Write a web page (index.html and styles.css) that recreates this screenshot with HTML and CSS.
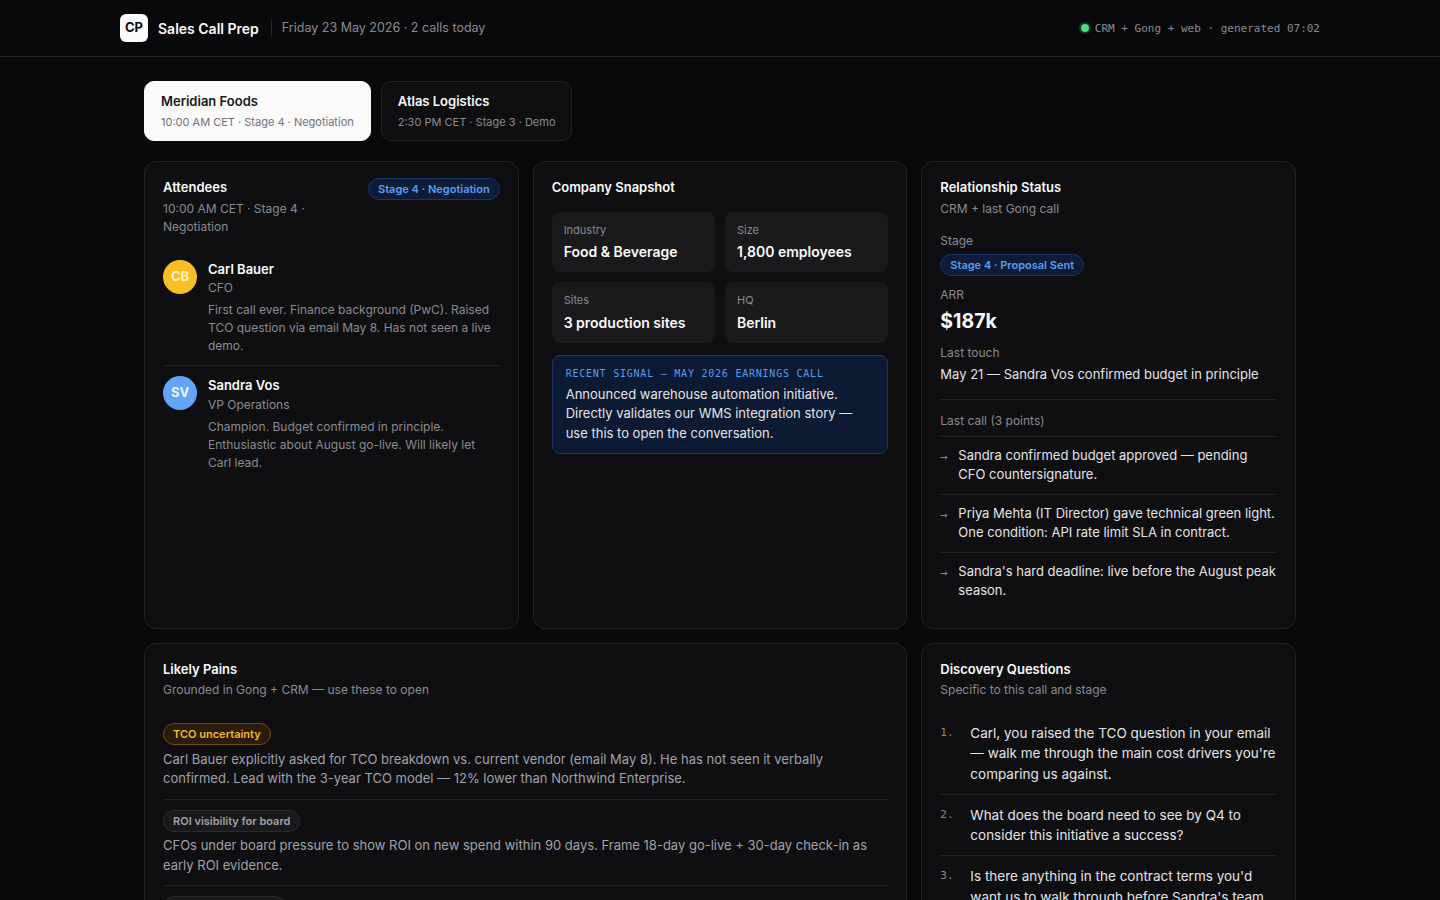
FILE: index.html
```html
<!DOCTYPE html>
<html lang="en">
  <head>
    <meta charset="UTF-8" />
    <meta name="viewport" content="width=device-width, initial-scale=1.0" />
    <title>Sales Call Prep</title>
    <link rel="stylesheet" href="styles.css">
  </head>
  <body>
    <!-- top bar -->
    <header class="topbar">
      <div class="topbar-inner">
        <div class="brand">
          <div class="logo">CP</div>
          <div class="brand-name">Sales Call Prep</div>
          <div class="brand-date">Friday 23 May 2026 · 2 calls today</div>
        </div>
        <div class="status">
          <span class="status-dot"></span>
          <span class="status-text">CRM + Gong + web · generated 07:02</span>
        </div>
      </div>
    </header>

    <main class="page">
      <!-- call tabs -->
      <div class="tabs">
        <div class="tab active">
          <div class="tab-name">Meridian Foods</div>
          <div class="tab-meta">10:00 AM CET · Stage 4 · Negotiation</div>
        </div>
        <div class="tab">
          <div class="tab-name">Atlas Logistics</div>
          <div class="tab-meta">2:30 PM CET · Stage 3 · Demo</div>
        </div>
      </div>

      <div class="grid">
        <!-- attendees -->
        <section class="card">
          <div class="card-head">
            <div>
              <h2 class="card-title">Attendees</h2>
              <p class="card-sub">10:00 AM CET · Stage 4 · Negotiation</p>
            </div>
            <span class="pill pill-blue">Stage 4 · Negotiation</span>
          </div>
          <div class="person">
            <div class="avatar avatar-amber">CB</div>
            <div>
              <div class="person-name">Carl Bauer</div>
              <div class="person-role">CFO</div>
              <p class="person-note">First call ever. Finance background (PwC). Raised TCO question via email May 8. Has not seen a live demo.</p>
            </div>
          </div>
          <div class="person">
            <div class="avatar avatar-blue">SV</div>
            <div>
              <div class="person-name">Sandra Vos</div>
              <div class="person-role">VP Operations</div>
              <p class="person-note">Champion. Budget confirmed in principle. Enthusiastic about August go-live. Will likely let Carl lead.</p>
            </div>
          </div>
        </section>

        <!-- company -->
        <section class="card">
          <h2 class="card-title">Company Snapshot</h2>
          <div class="facts">
            <div class="fact">
              <div class="fact-label">Industry</div>
              <div class="fact-value">Food &amp; Beverage</div>
            </div>
            <div class="fact">
              <div class="fact-label">Size</div>
              <div class="fact-value">1,800 employees</div>
            </div>
            <div class="fact">
              <div class="fact-label">Sites</div>
              <div class="fact-value">3 production sites</div>
            </div>
            <div class="fact">
              <div class="fact-label">HQ</div>
              <div class="fact-value">Berlin</div>
            </div>
          </div>
          <div class="signal">
            <div class="signal-label">RECENT SIGNAL — MAY 2026 EARNINGS CALL</div>
            <p class="signal-text">Announced warehouse automation initiative. Directly validates our WMS integration story — use this to open the conversation.</p>
          </div>
        </section>

        <!-- relationship -->
        <section class="card">
          <h2 class="card-title">Relationship Status</h2>
          <p class="card-sub">CRM + last Gong call</p>
          <div class="field-label first">Stage</div>
          <span class="pill pill-blue">Stage 4 · Proposal Sent</span>
          <div class="field-label">ARR</div>
          <div class="arr">$187k</div>
          <div class="field-label">Last touch</div>
          <div class="touch">May 21 — Sandra Vos confirmed budget in principle</div>
          <div class="points-label">Last call (3 points)</div>
          <ul class="points">
            <li class="point"><span class="arrow">→</span><span>Sandra confirmed budget approved — pending CFO countersignature.</span></li>
            <li class="point"><span class="arrow">→</span><span>Priya Mehta (IT Director) gave technical green light. One condition: API rate limit SLA in contract.</span></li>
            <li class="point"><span class="arrow">→</span><span>Sandra's hard deadline: live before the August peak season.</span></li>
          </ul>
        </section>

        <!-- pains -->
        <section class="card wide">
          <h2 class="card-title">Likely Pains</h2>
          <p class="card-sub">Grounded in Gong + CRM — use these to open</p>
          <div class="pains">
            <div class="pain">
              <span class="pill pill-amber">TCO uncertainty</span>
              <p class="pain-text">Carl Bauer explicitly asked for TCO breakdown vs. current vendor (email May 8). He has not seen it verbally confirmed. Lead with the 3-year TCO model — 12% lower than Northwind Enterprise.</p>
            </div>
            <div class="pain">
              <span class="pill pill-grey">ROI visibility for board</span>
              <p class="pain-text">CFOs under board pressure to show ROI on new spend within 90 days. Frame 18-day go-live + 30-day check-in as early ROI evidence.</p>
            </div>
            <div class="pain">
              <span class="pill pill-grey">Peak season timing</span>
              <p class="pain-text">Sandra needs the system live before the August peak season. Walk through the rollout plan early.</p>
            </div>
          </div>
        </section>

        <!-- questions -->
        <section class="card">
          <h2 class="card-title">Discovery Questions</h2>
          <p class="card-sub">Specific to this call and stage</p>
          <ol class="questions">
            <li class="question"><span class="q-num">1.</span><span>Carl, you raised the TCO question in your email — walk me through the main cost drivers you're comparing us against.</span></li>
            <li class="question"><span class="q-num">2.</span><span>What does the board need to see by Q4 to consider this initiative a success?</span></li>
            <li class="question"><span class="q-num">3.</span><span>Is there anything in the contract terms you'd want us to walk through before Sandra's team signs?</span></li>
          </ol>
        </section>
      </div>
    </main>
  </body>
</html>
```

FILE: styles.css
```css
* {
  padding: 0;
  margin: 0;
  box-sizing: border-box;
}

body {
  font-family: Inter, "Liberation Sans", sans-serif;
  font-size: 13px;
  line-height: 1.5;
  color: #fafafa;
  background-color: #09090b;
}

/* top bar */
.topbar {
  height: 57px;
  border-bottom: 1px solid #27272a;
}

.topbar-inner {
  display: flex;
  align-items: center;
  justify-content: space-between;
  max-width: 1200px;
  height: 56px;
  margin: 0 auto;
}

.brand {
  display: flex;
  align-items: center;
}

.logo {
  width: 28px;
  height: 28px;
  border-radius: 6px;

  text-align: center;
  line-height: 26px;
  font-size: 13px;
  font-weight: 700;
  color: #09090b;

  background-color: #fafafa;
}

.brand-name {
  margin: 0 12px 0 10px;

  font-size: 14px;
  font-weight: 600;
}

.brand-date {
  padding-left: 10px;
  border-left: 1px solid #27272a;

  font-size: 12.5px;
  line-height: 18px;
  color: #8a8a93;
}

.status {
  display: flex;
  align-items: center;
  gap: 6px;

  font-family: "DejaVu Sans Mono", "Liberation Mono", monospace;
  font-size: 11px;
  color: #8a8a93;
}

.status-text {
  padding-top: 2px;
}

.status-dot {
  width: 8px;
  height: 8px;
  border-radius: 50%;

  background-color: #4ade80;
  box-shadow: 0 0 0 2px rgba(74, 222, 128, 0.2);
}

/* page */
.page {
  max-width: 1200px;
  margin: 0 auto;
  padding: 24px;
}

.tabs {
  display: flex;
  gap: 10px;
  margin-bottom: 20px;
}

.tab {
  height: 60px;
  padding: 9px 16px;
  border: 1px solid #232326;
  border-radius: 10px;

  background-color: #0f0f12;
}

.tab.active {
  border-color: #fafafa;
  color: #18181b;
  background-color: #fafafa;
}

.tab-name {
  font-size: 13px;
  font-weight: 600;
  line-height: 20px;
}

.tab-meta {
  margin-top: 2px;

  font-size: 11px;
  line-height: 18px;
  color: #8a8a93;
}

.tab.active .tab-meta {
  color: #71717a;
}

.grid {
  display: grid;
  grid-template-columns: repeat(3, 1fr);
  grid-template-rows: 467.5px auto;
  gap: 14px;
}

.card {
  padding: 16px 18px 18px;
  border: 1px solid #232326;
  border-radius: 12px;

  background-color: #0f0f12;
}

.card.wide {
  grid-column: span 2;
}

.card-head {
  display: flex;
  justify-content: space-between;
  align-items: flex-start;
  gap: 16px;
}

.card-title {
  font-size: 13px;
  font-weight: 600;
  line-height: 18px;
}

.card-sub {
  margin-top: 3.5px;

  font-size: 12px;
  line-height: 18px;
  color: #8a8a93;
}

/* pills */
.pill {
  display: inline-block;
  padding: 2px 9px;
  border: 1px solid;
  border-radius: 999px;

  font-size: 11px;
  font-weight: 600;
  line-height: 16px;
  white-space: nowrap;
}

.pill-blue {
  border-color: #1b3566;
  color: #5a9cf0;
  background-color: #0d1c38;
}

.pill-amber {
  border-color: #6e4a18;
  color: #f5b82e;
  background-color: #2a1c08;
}

.pill-grey {
  border-color: #2a2a2e;
  color: #a1a1aa;
  background-color: #1a1a1d;
}

/* attendees */
.person {
  display: flex;
  gap: 11px;
  padding: 0 0 10.75px;
  border-bottom: 1px solid #232326;
  margin-bottom: 10px;
}

.card-head + .person {
  margin-top: 24px;
}

.person:last-child {
  border-bottom: 0;
}

.avatar {
  flex-shrink: 0;
  width: 34px;
  height: 34px;
  border-radius: 50%;

  text-align: center;
  line-height: 32px;
  font-size: 13px;
  font-weight: 700;
}

.avatar-amber {
  color: #fef3c7;
  background-color: #fbbf24;
}

.avatar-blue {
  color: #eff6ff;
  background-color: #60a5fa;
}

.person-name {
  font-size: 13px;
  font-weight: 600;
  line-height: 19.5px;
}

.person-role {
  font-size: 12px;
  line-height: 18px;
  color: #8a8a93;
}

.person-note {
  margin-top: 3.5px;

  font-size: 12px;
  line-height: 18px;
  color: #8a8a93;
}

.person:last-child .person-note {
  margin-top: 4.5px;
}

/* company */
.facts {
  display: grid;
  grid-template-columns: 1fr 1fr;
  gap: 10px;
  margin-top: 15.75px;
}

.fact {
  padding: 10px 12px;
  border-radius: 8px;

  background-color: #1a1a1d;
}

.fact-label {
  font-size: 11px;
  line-height: 16.5px;
  color: #8a8a93;
}

.fact-value {
  margin-top: 3px;

  font-size: 14px;
  font-weight: 600;
  line-height: 21px;
}

.signal {
  margin-top: 12px;
  padding: 10px 13px 9.5px;
  border: 1px solid #1b3566;
  border-radius: 8px;

  background-color: #0c1a33;
}

.signal-label {
  font-family: "DejaVu Sans Mono", "Liberation Mono", monospace;
  font-size: 10px;
  letter-spacing: 0.77px;
  line-height: 15px;
  color: #5a9cf0;
}

.signal-text {
  margin-top: 4px;

  font-size: 13px;
  line-height: 19.5px;
  color: #e4e4e7;
}

/* relationship */
.field-label {
  margin-top: 10px;

  font-size: 12px;
  line-height: 18px;
  color: #8a8a93;
}

.field-label.first {
  margin-top: 14px;
  margin-bottom: 4px;
}

.arr {
  margin: 4px 0 -1px;

  font-size: 19.5px;
  font-weight: 700;
  line-height: 27px;
}

.touch {
  margin-top: 3px;

  font-size: 13px;
  line-height: 19.5px;
  color: #e4e4e7;
}

.points-label {
  margin-top: 14.5px;
  padding-top: 12px;
  border-top: 1px solid #232326;

  font-size: 12px;
  line-height: 18px;
  color: #8a8a93;
}

.points {
  margin-top: 6px;
  list-style: none;
}

.point {
  display: flex;
  gap: 8px;
  padding: 9px 0 9px;
  border-top: 1px solid #232326;

  font-size: 13px;
  line-height: 19.5px;
  color: #e4e4e7;
}

.arrow {
  flex-shrink: 0;
  width: 10px;
  margin-top: 2px;

  font-family: "DejaVu Sans Mono", monospace;
  font-size: 12px;
  color: #8a8a93;
}

/* pains */
.pains {
  margin-top: 14px;
}

.pain {
  padding: 10px 0;
  border-bottom: 1px solid #232326;
}

.pain:last-child {
  border-bottom: 0;
}

.pain-text {
  margin-top: 4.5px;

  font-size: 13px;
  line-height: 19.5px;
  color: #a1a1aa;
}

/* questions */
.questions {
  margin-top: 14px;
  list-style: none;
}

.question {
  display: flex;
  gap: 12px;
  padding: 10px 0;
  border-bottom: 1px solid #232326;

  font-size: 13.5px;
  line-height: 20.25px;
  color: #e4e4e7;
}

.question:last-child {
  border-bottom: 0;
}

.q-num {
  flex-shrink: 0;
  width: 18px;

  font-family: "DejaVu Sans Mono", monospace;
  font-size: 11px;
  line-height: 20px;
  color: #8a8a93;
}
```
